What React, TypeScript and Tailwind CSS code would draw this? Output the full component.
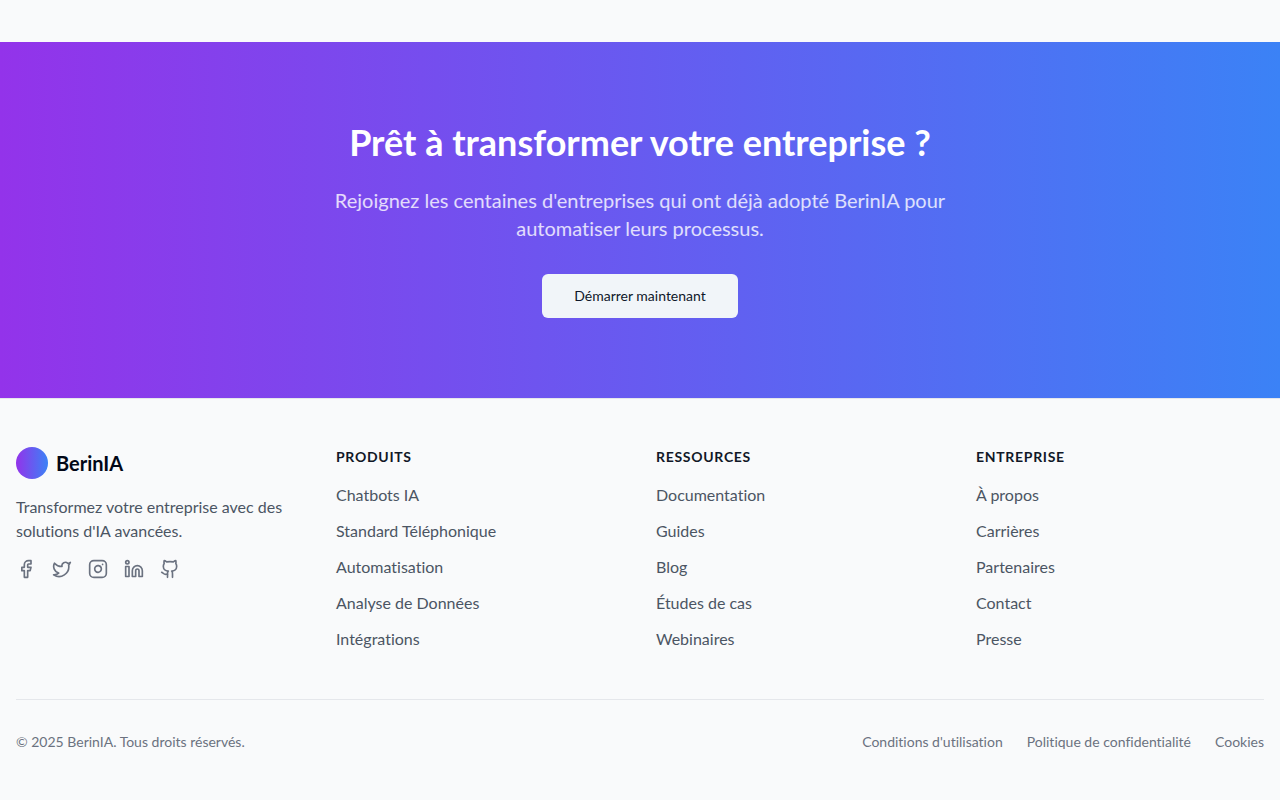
import { Facebook, Github, Instagram, Linkedin, Twitter } from "lucide-react";

const columns = [
  { title: "Produits", links: ["Chatbots IA", "Standard Téléphonique", "Automatisation", "Analyse de Données", "Intégrations"] },
  { title: "Ressources", links: ["Documentation", "Guides", "Blog", "Études de cas", "Webinaires"] },
  { title: "Entreprise", links: ["À propos", "Carrières", "Partenaires", "Contact", "Presse"] },
];

const socials = [
  { name: "Facebook", Icon: Facebook },
  { name: "Twitter", Icon: Twitter },
  { name: "Instagram", Icon: Instagram },
  { name: "LinkedIn", Icon: Linkedin },
  { name: "GitHub", Icon: Github },
];

const legal = ["Conditions d'utilisation", "Politique de confidentialité", "Cookies"];

export default function App() {
  return (
    <div className="min-h-screen bg-gray-50 pt-[42px] font-['Lato',sans-serif] text-[#020817] [font-variant-ligatures:none]">
      <section className="bg-linear-to-r/srgb from-[#9333ea] to-[#3b82f6] px-4 py-20 text-center text-white">
        <h2 className="mb-6 text-4xl font-bold">Prêt à transformer votre entreprise ?</h2>
        <p className="mx-auto mb-8 max-w-2xl text-xl text-white/80">
          Rejoignez les centaines d'entreprises qui ont déjà adopté BerinIA pour automatiser leurs processus.
        </p>
        <button type="button" className="h-11 rounded-md bg-[#f1f5f9] px-8 text-sm font-normal text-[#0f172a]">
          Démarrer maintenant
        </button>
      </section>
      <footer className="border-t border-[#e5e7eb] px-4 py-12">
        <div className="grid grid-cols-4 gap-8">
          <div>
            <a href="#" className="mb-4 flex items-center gap-2">
              <span className="size-8 rounded-full bg-linear-to-r/srgb from-[#9333ea] to-[#3b82f6]" />
              <span className="text-xl font-bold">BerinIA</span>
            </a>
            <p className="mb-4 text-[#4b5563]">Transformez votre entreprise avec des solutions d'IA avancées.</p>
            <div className="flex gap-4 text-[#6b7280]">
              {socials.map(({ name, Icon }) => (
                <a key={name} href="#" aria-label={name}>
                  <Icon size={20} />
                </a>
              ))}
            </div>
          </div>
          {columns.map(({ title, links }) => (
            <div key={title}>
              <h3 className="mb-4 text-sm font-bold tracking-wider text-[#111827] uppercase">{title}</h3>
              <ul className="space-y-3">
                {links.map((link) => (
                  <li key={link}>
                    <a href="#" className="text-[#4b5563]">{link}</a>
                  </li>
                ))}
              </ul>
            </div>
          ))}
        </div>
        <div className="mt-12 flex items-center justify-between border-t border-[#e5e7eb] pt-8 text-sm text-[#6b7280]">
          <p>© 2025 BerinIA. Tous droits réservés.</p>
          <div className="flex gap-6">
            {legal.map((item) => (
              <a key={item} href="#">{item}</a>
            ))}
          </div>
        </div>
      </footer>
    </div>
  );
}
